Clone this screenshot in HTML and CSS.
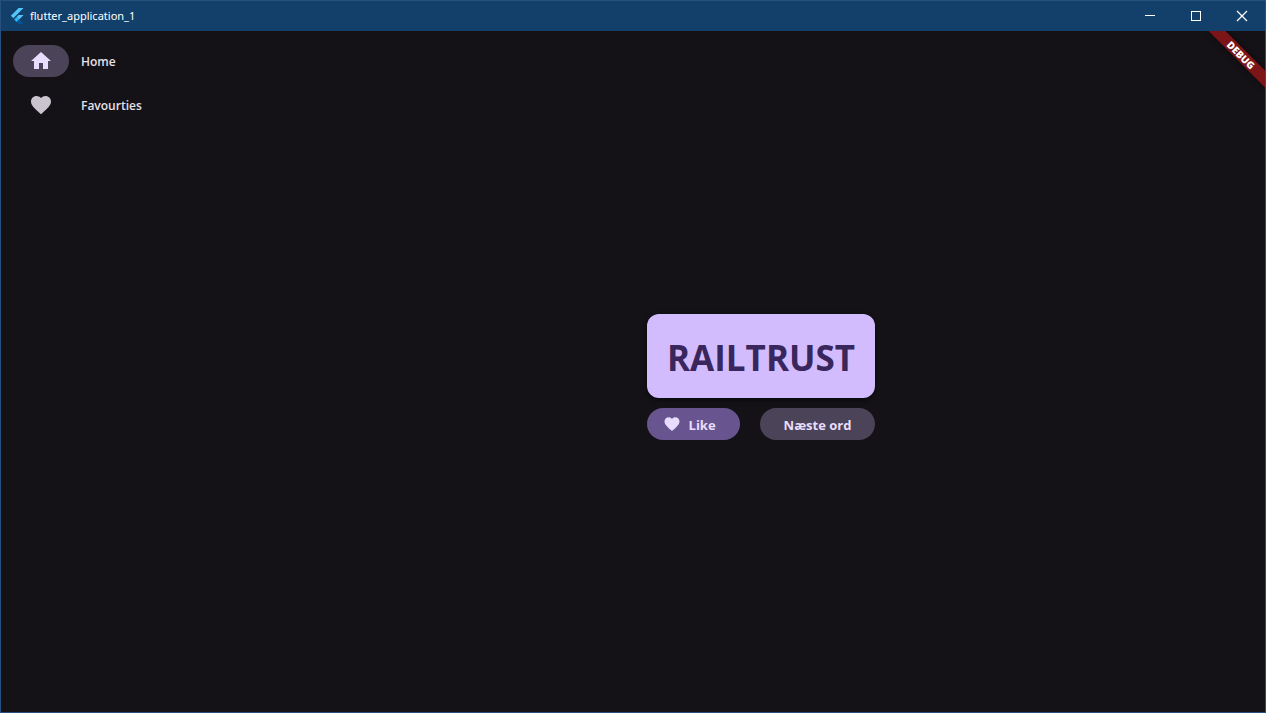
FILE: index.html
```html
<!DOCTYPE html>
<html lang="da">
<head>
<meta charset="utf-8">
<meta name="viewport" content="width=device-width, initial-scale=1">
<title>flutter_application_1</title>
<link rel="stylesheet" href="styles.css">
</head>
<body>
<div class="window">
  <header class="titlebar">
    <svg class="app-logo" viewBox="0 0 14 17" aria-hidden="true">
      <path fill="#54c5f8" d="M8.7 0H14L3.1 10.8.5 8.2z"/>
      <path fill="#54c5f8" d="M8.7 7.5H14L9.3 12.2 6.6 9.6z"/>
      <path fill="#29b6f6" d="M4 12.2l2.6-2.6 2.7 2.6-2.7 2.7z"/>
      <path fill="#01579b" d="M6.6 14.9l2.7-2.7 4.7 4.6H8.5z"/>
    </svg>
    <h1 class="app-title">flutter_application_1</h1>
    <div class="caption-buttons">
      <button class="caption-button" type="button" aria-label="Minimize"><svg viewBox="0 0 11 11" shape-rendering="crispEdges"><path d="M0 4.500h10"/></svg></button>
      <button class="caption-button" type="button" aria-label="Maximize"><svg viewBox="0 0 11 11" shape-rendering="crispEdges"><path d="M.5 .5h9v9h-9z"/></svg></button>
      <button class="caption-button" type="button" aria-label="Close"><svg viewBox="0 0 11 11"><path stroke-width="1.300" d="M0 0l10 10M10 0l-10 10"/></svg></button>
    </div>
  </header>
  <div class="content">
    <nav class="rail">
      <a class="rail-item" href="#home" aria-current="page">
        <span class="rail-icon rail-icon-selected"><svg viewBox="0 0 24 24" aria-hidden="true"><path d="M10 20v-6h4v6h5v-8h3L12 3 2 12h3v8z"/></svg></span>
        <span class="rail-label">Home</span>
      </a>
      <a class="rail-item" href="#favourites">
        <span class="rail-icon"><svg viewBox="0 0 24 24" aria-hidden="true"><path d="M12 21.350l-1.450-1.320C5.400 15.360 2 12.280 2 8.500 2 5.420 4.420 3 7.500 3c1.740 0 3.410.81 4.500 2.090C13.090 3.810 14.760 3 16.500 3 19.580 3 22 5.420 22 8.500c0 3.780-3.400 6.860-8.550 11.540z"/></svg></span>
        <span class="rail-label">Favourties</span>
      </a>
    </nav>
    <main class="generator">
      <p class="word-card">RAILTRUST</p>
      <div class="actions">
        <button class="action action-like" type="button">
          <svg viewBox="0 0 24 24" aria-hidden="true"><path d="M12 21.350l-1.450-1.320C5.400 15.360 2 12.280 2 8.500 2 5.420 4.420 3 7.500 3c1.740 0 3.410.81 4.500 2.090C13.090 3.810 14.760 3 16.500 3 19.580 3 22 5.420 22 8.500c0 3.780-3.400 6.860-8.550 11.540z"/></svg>
          <span class="action-label">Like</span>
        </button>
        <button class="action action-next" type="button"><span class="action-label">Næste ord</span></button>
      </div>
    </main>
    <div class="debug-banner">DEBUG</div>
  </div>
</div>
</body>
</html>
```
FILE: styles.css
```css
* {
  box-sizing: border-box;
}

body {
  margin: 0;
  font-family: "Open Sans", "Noto Sans", sans-serif;
  background: #141217;
}

button {
  margin: 0;
  border: 0;
  font: inherit;
  color: inherit;
}

.window {
  display: flex;
  flex-direction: column;
  min-height: 100vh;
  border: 1px solid #26517f;
}

.titlebar {
  display: flex;
  align-items: center;
  height: 30px;
  padding-left: 9px;
  background: #133f6b;
  color: #fff;
}

.app-logo {
  width: 14px;
  height: 16px;
  margin-right: 6px;
}

.app-title {
  flex: 1;
  margin: 0;
  padding-bottom: 2px;
  font-family: "Noto Sans", "Open Sans", sans-serif;
  font-size: 11px;
  font-weight: 400;
}

.app-logo,
.caption-buttons {
  flex: none;
}

.caption-buttons {
  display: flex;
}

.caption-button {
  display: grid;
  place-items: center;
  width: 46px;
  height: 30px;
  padding: 0;
  background: transparent;
}

.caption-button svg {
  width: 11px;
  height: 11px;
  overflow: visible;
  fill: none;
  stroke: #fff;
}

.content {
  position: relative;
  flex: 1;
  display: flex;
  overflow: hidden;
  background: #141217;
}

.rail {
  display: flex;
  flex-direction: column;
  gap: 12px;
  width: 256px;
  padding: 14px 12px;
}

.rail-item {
  display: flex;
  align-items: center;
  gap: 12px;
  color: #e6e0e9;
  font-size: 12px;
  font-weight: 600;
  line-height: 16px;
  text-decoration: none;
}

.rail-label,
.action-label {
  padding-top: 2px;
}

.rail-icon {
  display: grid;
  place-items: center;
  width: 56px;
  height: 32px;
  border-radius: 16px;
  color: #cac4cf;
}

.rail-icon-selected {
  background: #4b4358;
  color: #e9ddff;
}

.rail-icon svg {
  width: 24px;
  height: 24px;
  fill: currentColor;
}

.generator {
  flex: 1;
  display: flex;
  flex-direction: column;
  align-items: center;
  justify-content: center;
  gap: 10px;
  padding-top: 10px;
}

.word-card {
  margin: 0;
  padding: 22px 20px 18px;
  border-radius: 12px;
  background: #d3bcfd;
  color: #38265c;
  font-size: 35px;
  font-weight: 700;
  line-height: 44px;
  box-shadow: 0 2px 5px rgba(0, 0, 0, 0.6);
}

.actions {
  display: flex;
  gap: 20px;
}

.action {
  display: flex;
  align-items: center;
  gap: 8px;
  height: 32px;
  border-radius: 16px;
  font-size: 13px;
  font-weight: 700;
  line-height: 20px;
  color: #e9ddff;
}

.action-like {
  padding: 0 24px 0 16px;
  background: #68548e;
}

.action-next {
  padding: 0 24px;
  background: #4b4358;
}

.action svg {
  width: 18px;
  height: 18px;
  fill: currentColor;
}

.debug-banner {
  position: absolute;
  top: 18px;
  right: -16px;
  width: 80px;
  background: #7b1518;
  color: #fff;
  font-size: 10px;
  font-weight: 800;
  line-height: 12px;
  text-align: center;
  transform: rotate(45deg);
  box-shadow: 0 0 6px rgba(0, 0, 0, 0.5);
}
```
